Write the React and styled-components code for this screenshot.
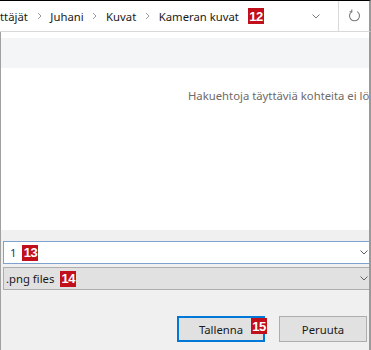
import React from "react";
import styled, { createGlobalStyle } from "styled-components";

const GlobalStyle = createGlobalStyle`
  html, body {
    margin: 0;
    padding: 0;
    background: #ffffff;
  }
  body {
    font-family: "Noto Sans", "Open Sans", sans-serif;
  }
`;

const Window = styled.div`
  width: 371px;
  height: 350px;
  display: flex;
  flex-direction: column;
  overflow: hidden;
  font-size: 12px;
  color: #1a1a1a;
`;

const AddressBar = styled.div`
  height: 30px;
  border-top: 1px solid #000;
  border-bottom: 1px solid #d9d9d9;
  border-right: 2px solid #9a9a9a;
  display: flex;
  align-items: center;
  overflow: hidden;
`;

const Crumbs = styled.div`
  flex: 1;
  display: flex;
  align-items: center;
  white-space: nowrap;
  overflow: hidden;
`;

const Crumb = styled.span`
  font-size: 11.3px;
  color: #1a1a1a;
`;

const CrumbSep = styled.span`
  width: 22.5px;
  display: flex;
  justify-content: center;
  align-items: center;
`;

const Badge = styled.span`
  display: inline-flex;
  align-items: center;
  justify-content: center;
  width: 16px;
  height: 16px;
  background: #c20f1c;
  color: #fff;
  font-family: "Liberation Sans", Arial, sans-serif;
  font-weight: bold;
  font-size: 13px;
  letter-spacing: -0.5px;
  margin-left: ${(p) => p.$gap || 8}px;
`;

const HistoryButton = styled.div`
  width: 26px;
  height: 30px;
  display: flex;
  align-items: center;
  justify-content: center;
  margin-right: 9px;
`;

const RefreshButton = styled.div`
  width: 30px;
  height: 30px;
  border-left: 1px solid #d9d9d9;
  display: flex;
  align-items: center;
  justify-content: center;
`;

const Body = styled.div`
  flex: 1;
  display: flex;
  flex-direction: column;
  border-left: 1px solid #a0a0a0;
  border-right: 2px solid #9a9a9a;
  overflow: hidden;
`;

const WhiteStrip = styled.div`
  height: 6px;
  background: #fff;
`;

const HeaderBand = styled.div`
  height: 30px;
  background: #f4f5f7;
`;

const Results = styled.div`
  height: 162px;
  background: #fff;
  padding: 19px 0 0 187px;
  box-sizing: border-box;
  white-space: nowrap;
  overflow: hidden;
`;

const EmptyText = styled.span`
  font-size: 11.3px;
  color: #6f6a66;
`;

const BottomPanel = styled.div`
  flex: 1;
  background: #f0f0f0;
  display: flex;
  flex-direction: column;
  padding: 11px 0 0 2px;
`;

const Field = styled.div`
  height: 21px;
  margin-right: -10px;
  border: 1px solid ${(p) => (p.$focused ? "#7da2ce" : "#adadad")};
  background: ${(p) => (p.$focused ? "#fff" : "#e1e1e1")};
  display: flex;
  align-items: center;
  padding: 0 10px 0 ${(p) => (p.$focused ? 6 : 2)}px;
  margin-bottom: 3px;
`;

const FieldText = styled.span`
  font-size: 11.3px;
  color: #1a1a1a;
`;

const FieldValue = styled(FieldText)`
  color: #1a3c6a;
`;

const FieldArrow = styled.div`
  margin-left: auto;
  display: flex;
  align-items: center;
`;

const ButtonRow = styled.div`
  display: flex;
  justify-content: flex-end;
  gap: 14px;
  margin-top: 23px;
  padding-right: 2px;
`;

const Button = styled.div`
  position: relative;
  width: 88px;
  height: 26px;
  box-sizing: border-box;
  border: ${(p) => (p.$primary ? "2px solid #0078d7" : "1px solid #adadad")};
  background: #e1e1e1;
  display: flex;
  align-items: center;
  justify-content: center;
  font-size: 11.3px;
  color: #1a1a1a;
`;

const OverBadge = styled(Badge)`
  position: absolute;
  top: 0;
  left: 72px;
  margin-left: 0;
`;

const Chevron = () => (
  <svg width="5" height="8" viewBox="0 0 5 8">
    <path d="M1 1 L4 4 L1 7" fill="none" stroke="#9a9a9a" strokeWidth="1" />
  </svg>
);

const DownChevron = ({ color = "#7a7a7a" }) => (
  <svg width="8" height="5" viewBox="0 0 8 5">
    <path d="M0.5 0.5 L4 4 L7.5 0.5" fill="none" stroke={color} strokeWidth="1" />
  </svg>
);

const RefreshIcon = () => (
  <svg width="13" height="14" viewBox="0 0 13 14">
    <path
      d="M9.2 2.6 A5 5 0 1 1 3.8 2.6"
      fill="none"
      stroke="#7a7a7a"
      strokeWidth="1.1"
    />
    <path d="M3.8 0.6 L3.8 2.8 L1.6 2.8" fill="none" stroke="#7a7a7a" strokeWidth="1.1" />
  </svg>
);

export default function App() {
  const crumbs = ["ttäjät", "Juhani", "Kuvat", "Kameran kuvat"];
  return (
    <Window>
      <GlobalStyle />
      <AddressBar>
        <Crumbs>
          {crumbs.map((c, i) => (
            <React.Fragment key={c}>
              {i > 0 && (
                <CrumbSep>
                  <Chevron />
                </CrumbSep>
              )}
              <Crumb>{c}</Crumb>
            </React.Fragment>
          ))}
          <Badge $gap={9}>12</Badge>
        </Crumbs>
        <HistoryButton>
          <DownChevron />
        </HistoryButton>
        <RefreshButton>
          <RefreshIcon />
        </RefreshButton>
      </AddressBar>
      <Body>
        <WhiteStrip />
        <HeaderBand />
        <Results>
          <EmptyText>Hakuehtoja täyttäviä kohteita ei löytynyt.</EmptyText>
        </Results>
        <BottomPanel>
          <Field $focused>
            <FieldValue>1</FieldValue>
            <Badge $gap={6}>13</Badge>
            <FieldArrow>
              <DownChevron color="#606060" />
            </FieldArrow>
          </Field>
          <Field>
            <FieldText>.png files</FieldText>
            <Badge $gap={6}>14</Badge>
            <FieldArrow>
              <DownChevron color="#606060" />
            </FieldArrow>
          </Field>
          <ButtonRow>
            <Button $primary>
              Tallenna
              <OverBadge>15</OverBadge>
            </Button>
            <Button>Peruuta</Button>
          </ButtonRow>
        </BottomPanel>
      </Body>
    </Window>
  );
}
